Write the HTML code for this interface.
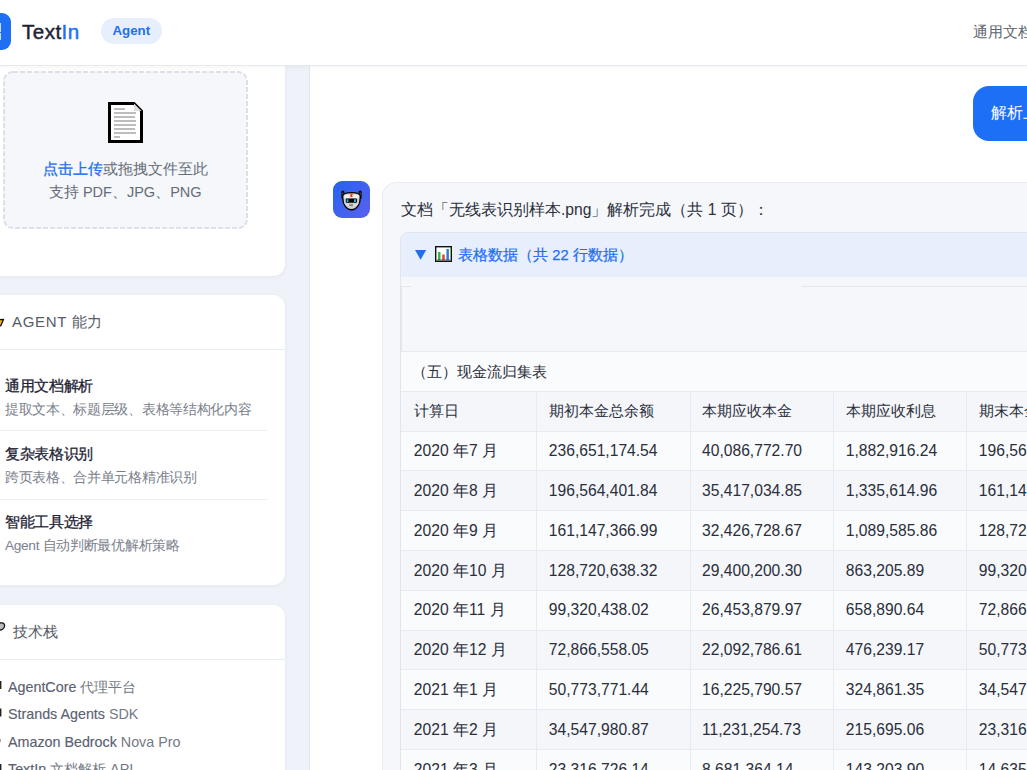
<!DOCTYPE html>
<html><head><meta charset="utf-8">
<style>
*{box-sizing:border-box;margin:0;padding:0}
html,body{width:1027px;height:770px;overflow:hidden;background:#fff;font-family:"Liberation Sans",sans-serif;color:#1f2937}
.abs{position:absolute}
#header{position:absolute;left:0;top:0;width:1027px;height:66px;background:#fff;border-bottom:1px solid #e6e9ef;box-shadow:0 2px 4px rgba(0,0,0,0.035);z-index:5}
#logo{position:absolute;left:-26px;top:13px;width:36.5px;height:36.5px;border-radius:9px;background:#1f6ff5}
#brand{position:absolute;left:22px;top:19.5px;font-size:20.6px;letter-spacing:0.45px;-webkit-text-stroke:0.45px currentColor;line-height:24px;color:#1e2233;font-weight:normal;white-space:nowrap}
#brand span{color:#1f6ff5;-webkit-text-stroke:0.45px #1f6ff5}
#pill{position:absolute;left:101px;top:18px;width:60.5px;height:26px;border-radius:13px;background:#e7effd;color:#2370ee;font-size:13.3px;font-weight:bold;line-height:26px;text-align:center}
#hright{position:absolute;left:973px;top:23px;font-size:14.5px;color:#60666f;white-space:nowrap;line-height:18px}
#sidebar{position:absolute;left:0;top:66px;width:310px;height:704px;background:#eff2f8;border-right:1px solid #e3e7ef}
.card{position:absolute;background:#fff;border-radius:12px;box-shadow:0 1px 4px rgba(30,50,90,0.06)}
#main{position:absolute;left:310px;top:66px;width:717px;height:704px;background:#fff}
.item{position:absolute;left:44.9px;width:260px}
.it{font-size:14.7px;letter-spacing:-0.3px;line-height:20px;font-weight:normal;-webkit-text-stroke:0.28px #1e2233;color:#1e2233;white-space:nowrap}
.id{font-size:13.7px;letter-spacing:-0.3px;line-height:22px;color:#7a808b;white-space:nowrap;margin-top:2.5px}
.tech{position:absolute;left:48px;font-size:14.3px;line-height:20px;color:#737985;white-space:nowrap}
.tech b{font-weight:normal;color:#5b6170;-webkit-text-stroke:0.15px #5b6170}
.emo{display:inline-block;width:20px}
.emo2{display:inline-block;width:18px}
#ububble{left:972.8px;top:85.7px;width:300px;height:55px;border-radius:16px;background:#1d6ff5;color:#fff;font-size:15.65px;line-height:53px;padding-left:18.7px;white-space:nowrap}
#avatar{left:333px;top:181.2px;width:36.8px;height:36.8px;border-radius:9px;background:linear-gradient(135deg,#2563f0,#5b60ee)}
#abubble{left:381.5px;top:181.5px;width:700px;height:700px;border-radius:14px;background:#f5f7fa;border:1px solid #e8ebf0}
#amsg{left:401px;top:198px;font-size:15.65px;line-height:24px;color:#2b2f3a;white-space:nowrap}
#details{left:400.4px;top:231.8px;width:700px;height:700px;border-radius:8px;border:1px solid #dfe4ee;background:#f5f7fa}
#summary{left:401.4px;top:232.8px;width:700px;height:43.8px;border-radius:7px 0 0 0;background:#e8effc}
#stext{left:56.8px;top:10px;font-size:14.7px;line-height:24px;color:#1f6ff5;-webkit-text-stroke:0.25px #1f6ff5;white-space:nowrap}
#tablewrap{left:401px;top:276.6px;width:700px;height:600px}
.tr{position:absolute;left:0;width:700px;height:39.8px;border-top:1px solid #e7eaf0}
.td{position:absolute;top:0.5px;line-height:38.8px;font-size:15.65px;color:#2b2f3a;white-space:nowrap}
.td.cj{font-size:15px}
.cl{position:absolute;top:-1px;width:1px;height:40.8px;background:#e7eaf0}
</style></head><body>
<div id="header">
  <div id="logo"><div class="abs" style="left:25.8px;top:10px;width:1.6px;height:9px;background:rgba(255,255,255,0.75)"></div><div class="abs" style="left:25.8px;top:20px;width:1.6px;height:6.8px;background:rgba(255,255,255,0.75)"></div></div>
  <div id="brand">Text<span>In</span></div>
  <div id="pill">Agent</div>
  <div id="hright">通用文档解析</div>
</div>
<div id="sidebar">
<svg class="abs" style="left:0;top:0;z-index:3" width="12" height="704" viewBox="0 66 12 704">
<path d="M-3 320 L3.6 319.3 L0.8 325.8 L-3 326 Z" fill="#f5b21b" stroke="#111" stroke-width="1.3" stroke-linejoin="round"/>
<path d="M-3 624.5 C0 622 4.5 622.5 4.6 625.5 C4.6 628.5 1.5 630.5 -3 630.5 Z" fill="#bbb" stroke="#111" stroke-width="1.3"/>
<rect x="0" y="681" width="1.4" height="8" fill="#222"/>
<rect x="0" y="708.5" width="1.4" height="8" fill="#222"/>
<rect x="0" y="739" width="1" height="3" fill="#aaa"/>
<rect x="0" y="764" width="1.4" height="6" fill="#222"/>
</svg>
  <div class="card" style="left:-40px;top:-40px;width:325px;height:250px">
    <svg class="abs" style="left:42.5px;top:45px" width="245" height="158" viewBox="0 0 245 158"><rect x="1" y="1" width="243" height="156" rx="9" ry="9" fill="#f5f7fa" stroke="#dce1e9" stroke-width="2" stroke-dasharray="5 2"/></svg>
    <div class="abs" style="left:148px;top:76px;width:35px;height:41px">
      <svg width="35" height="41" viewBox="0 0 35 41"><path d="M1.5 1.5 H26 L33.5 9 V39.5 H1.5 Z" fill="#fff" stroke="#000" stroke-width="3" stroke-linejoin="miter"/><path d="M26 1.5 V9 H33.5" fill="#ddd" stroke="none"/>
      <g stroke="#999" stroke-width="1.3"><line x1="6" y1="7" x2="17" y2="7"/><line x1="6" y1="11" x2="28" y2="11"/><line x1="6" y1="15" x2="27" y2="15"/><line x1="6" y1="19" x2="28" y2="19"/><line x1="6" y1="23" x2="28" y2="23"/><line x1="6" y1="27" x2="27" y2="27"/><line x1="6" y1="31" x2="28" y2="31"/><line x1="6" y1="35" x2="12" y2="35"/></g></svg>
    </div>
    <div class="abs t-up" style="left:43px;top:130.5px;width:244.5px;text-align:center;font-size:14.7px;line-height:24px;color:#666c78"><span style="color:#1f6ff5;-webkit-text-stroke:0.3px #1f6ff5">点击上传</span>或拖拽文件至此</div>
    <div class="abs" style="left:43px;top:154px;width:244.5px;text-align:center;font-size:14.5px;line-height:24px;color:#666c78">支持 PDF、JPG、PNG</div>
  </div>
  <div class="card" style="left:-40px;top:229px;width:325px;height:290px">
    <div class="abs sh" style="left:52px;top:14px;font-size:15px;letter-spacing:0.7px;line-height:26px;color:#565c68;white-space:nowrap">AGENT 能力</div>
    <div class="abs" style="left:0;top:53.5px;width:325px;height:1px;background:#e8ebf1"></div>
    <div class="item" style="top:81px"><div class="it">通用文档解析</div><div class="id">提取文本、标题层级、表格等结构化内容</div></div>
    <div class="abs" style="left:40px;top:135px;width:267px;height:1px;background:#eceef3"></div>
    <div class="item" style="top:149px"><div class="it">复杂表格识别</div><div class="id">跨页表格、合并单元格精准识别</div></div>
    <div class="abs" style="left:40px;top:203.5px;width:267px;height:1px;background:#eceef3"></div>
    <div class="item" style="top:217px"><div class="it">智能工具选择</div><div class="id">Agent 自动判断最优解析策略</div></div>
  </div>
  <div class="card" style="left:-40px;top:538.5px;width:325px;height:300px">
    <div class="abs sh" style="left:53px;top:14px;font-size:15px;line-height:26px;color:#565c68;white-space:nowrap">技术栈</div>
    <div class="abs" style="left:0;top:54px;width:325px;height:1px;background:#e8ebf1"></div>
    <div class="tech" style="top:72px"><b>AgentCore</b> 代理平台</div>
    <div class="tech" style="top:99.5px"><b>Strands Agents</b> SDK</div>
    <div class="tech" style="top:127px"><b>Amazon Bedrock</b> Nova Pro</div>
    <div class="tech" style="top:154.5px"><b>TextIn</b> 文档解析 API</div>
  </div>
</div>
<div id="main"></div>
<div class="abs" id="ububble">解析上传的文档</div>
<div class="abs" id="avatar"><svg width="21" height="21" viewBox="0 0 21 21" style="position:absolute;left:8px;top:8.5px">
<path d="M1.9 7.5 V2" stroke="#000" stroke-width="3" stroke-linecap="round"/>
<path d="M19.1 7.5 V2" stroke="#000" stroke-width="3" stroke-linecap="round"/>
<path d="M1.9 7.5 V3" stroke="#777" stroke-width="1" stroke-linecap="round"/>
<path d="M19.1 7.5 V3" stroke="#777" stroke-width="1" stroke-linecap="round"/>
<path d="M1.6 6.5 C1.6 3.6 5.5 2.6 10.5 2.6 C15.5 2.6 19.4 3.6 19.4 6.5 C19.4 14 16 19.8 10.5 19.8 C5 19.8 1.6 14 1.6 6.5 Z" fill="#cfcfcf" stroke="#000" stroke-width="1.4"/>
<path d="M3.2 5.8 C5 4.2 16 4.2 17.8 5.8 L17.6 8 H3.4 Z" fill="#f2f2f2"/>
<rect x="9.3" y="3.6" width="2.2" height="3.5" fill="#f03c1e"/>
<rect x="4.8" y="8.4" width="11.2" height="4.4" rx="1" fill="#000"/>
<rect x="5.7" y="9.3" width="1.7" height="2.7" fill="#2ab8dc"/>
<rect x="13" y="9.3" width="1.9" height="2.7" fill="#2ab8dc"/>
<path d="M3.4 13.5 C5 16 16 16 17.6 13.5" fill="none" stroke="#e8e8e8" stroke-width="1"/>
<rect x="8.2" y="14.6" width="3.8" height="1.1" fill="#555"/>
</svg></div>
<div class="abs" id="abubble"></div>
<div class="abs" id="amsg">文档「无线表识别样本.png」解析完成（共 1 页）：</div>
<div class="abs" id="details"></div>
<div class="abs" id="summary">
  <svg class="abs" style="left:14px;top:17.3px" width="12" height="10" viewBox="0 0 12 10"><path d="M0 0 H11.2 L5.6 9.7 Z" fill="#1f6ff5"/></svg>
  <svg class="abs" style="left:33.5px;top:13px" width="17" height="16" viewBox="0 0 17 16"><rect x="0.7" y="0.7" width="15.6" height="14.6" fill="#fff" stroke="#111" stroke-width="1.4"/><rect x="3" y="6" width="2.5" height="8" fill="#3bb54a"/><rect x="7.2" y="8.5" width="2.5" height="5.5" fill="#e8432e"/><rect x="11.4" y="3" width="2.5" height="11" fill="#2f7fd6"/><line x1="2" y1="14" x2="15" y2="14" stroke="#111" stroke-width="0.6"/></svg>
  <div class="abs" id="stext">表格数据（共 22 行数据）</div>
</div>
<div class="abs" id="tablewrap">
  <div class="abs" style="left:0;top:9.5px;width:10px;height:1px;background:#e3e6ec"></div>
  <div class="abs" style="left:401px;top:9.5px;width:300px;height:1px;background:#e3e6ec"></div>
  <div class="abs" style="left:0;top:9.5px;width:1px;height:600px;background:#e3e6ec"></div>
  <div class="tr" style="top:74.6px;background:#fafbfd;height:39.7px"><div class="td cj" style="left:10.8px">（五）现金流归集表</div></div>
  <div class="tr" style="top:114.3px;background:#f4f6fa"><div class="td cj" style="left:12.8px">计算日</div><div class="td cj" style="left:147.8px">期初本金总余额</div><div class="td cj" style="left:301px">本期应收本金</div><div class="td cj" style="left:444.8px">本期应收利息</div><div class="td cj" style="left:577.8px">期末本金余额</div><div class="cl" style="left:135px"></div><div class="cl" style="left:289px"></div><div class="cl" style="left:432px"></div><div class="cl" style="left:565px"></div></div>
  <div class="tr" style="top:154.1px;background:#fafbfd"><div class="td" style="left:12.8px">2020 年7 月</div><div class="td" style="left:147.8px">236,651,174.54</div><div class="td" style="left:301px">40,086,772.70</div><div class="td" style="left:444.8px">1,882,916.24</div><div class="td" style="left:577.8px">196,564,401.84</div><div class="cl" style="left:135px"></div><div class="cl" style="left:289px"></div><div class="cl" style="left:432px"></div><div class="cl" style="left:565px"></div></div>
  <div class="tr" style="top:193.9px;background:#f4f6fa"><div class="td" style="left:12.8px">2020 年8 月</div><div class="td" style="left:147.8px">196,564,401.84</div><div class="td" style="left:301px">35,417,034.85</div><div class="td" style="left:444.8px">1,335,614.96</div><div class="td" style="left:577.8px">161,147,366.99</div><div class="cl" style="left:135px"></div><div class="cl" style="left:289px"></div><div class="cl" style="left:432px"></div><div class="cl" style="left:565px"></div></div>
  <div class="tr" style="top:233.7px;background:#fafbfd"><div class="td" style="left:12.8px">2020 年9 月</div><div class="td" style="left:147.8px">161,147,366.99</div><div class="td" style="left:301px">32,426,728.67</div><div class="td" style="left:444.8px">1,089,585.86</div><div class="td" style="left:577.8px">128,720,638.32</div><div class="cl" style="left:135px"></div><div class="cl" style="left:289px"></div><div class="cl" style="left:432px"></div><div class="cl" style="left:565px"></div></div>
  <div class="tr" style="top:273.5px;background:#f4f6fa"><div class="td" style="left:12.8px">2020 年10 月</div><div class="td" style="left:147.8px">128,720,638.32</div><div class="td" style="left:301px">29,400,200.30</div><div class="td" style="left:444.8px">863,205.89</div><div class="td" style="left:577.8px">99,320,438.02</div><div class="cl" style="left:135px"></div><div class="cl" style="left:289px"></div><div class="cl" style="left:432px"></div><div class="cl" style="left:565px"></div></div>
  <div class="tr" style="top:313.3px;background:#fafbfd"><div class="td" style="left:12.8px">2020 年11 月</div><div class="td" style="left:147.8px">99,320,438.02</div><div class="td" style="left:301px">26,453,879.97</div><div class="td" style="left:444.8px">658,890.64</div><div class="td" style="left:577.8px">72,866,558.05</div><div class="cl" style="left:135px"></div><div class="cl" style="left:289px"></div><div class="cl" style="left:432px"></div><div class="cl" style="left:565px"></div></div>
  <div class="tr" style="top:353.1px;background:#f4f6fa"><div class="td" style="left:12.8px">2020 年12 月</div><div class="td" style="left:147.8px">72,866,558.05</div><div class="td" style="left:301px">22,092,786.61</div><div class="td" style="left:444.8px">476,239.17</div><div class="td" style="left:577.8px">50,773,771.44</div><div class="cl" style="left:135px"></div><div class="cl" style="left:289px"></div><div class="cl" style="left:432px"></div><div class="cl" style="left:565px"></div></div>
  <div class="tr" style="top:392.9px;background:#fafbfd"><div class="td" style="left:12.8px">2021 年1 月</div><div class="td" style="left:147.8px">50,773,771.44</div><div class="td" style="left:301px">16,225,790.57</div><div class="td" style="left:444.8px">324,861.35</div><div class="td" style="left:577.8px">34,547,980.87</div><div class="cl" style="left:135px"></div><div class="cl" style="left:289px"></div><div class="cl" style="left:432px"></div><div class="cl" style="left:565px"></div></div>
  <div class="tr" style="top:432.7px;background:#f4f6fa"><div class="td" style="left:12.8px">2021 年2 月</div><div class="td" style="left:147.8px">34,547,980.87</div><div class="td" style="left:301px">11,231,254.73</div><div class="td" style="left:444.8px">215,695.06</div><div class="td" style="left:577.8px">23,316,726.14</div><div class="cl" style="left:135px"></div><div class="cl" style="left:289px"></div><div class="cl" style="left:432px"></div><div class="cl" style="left:565px"></div></div>
  <div class="tr" style="top:472.5px;background:#fafbfd"><div class="td" style="left:12.8px">2021 年3 月</div><div class="td" style="left:147.8px">23,316,726.14</div><div class="td" style="left:301px">8,681,364.14</div><div class="td" style="left:444.8px">143,203.90</div><div class="td" style="left:577.8px">14,635,362.00</div><div class="cl" style="left:135px"></div><div class="cl" style="left:289px"></div><div class="cl" style="left:432px"></div><div class="cl" style="left:565px"></div></div>
</div>
</body></html>
